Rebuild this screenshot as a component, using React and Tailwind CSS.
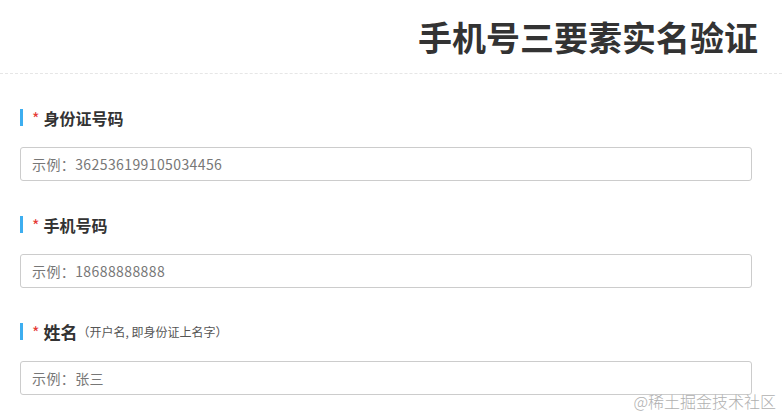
const FONT = '"Noto Sans CJK SC", "Noto Sans", "Liberation Sans", sans-serif';

const FIELDS = [
  { label: '身份证号码', placeholder: '示例：362536199105034456' },
  { label: '手机号码', placeholder: '示例：18688888888' },
  { label: '姓名', hint: '（开户名, 即身份证上名字）', placeholder: '示例：张三', big: true },
];

function Field({ field }) {
  return (
    <div className="pb-[35px]">
      <div className="flex items-center h-[17px]">
        <span className="w-[3px] h-[17px] bg-[#3daef0]" />
        <span className="ml-[9px] text-[16px] text-[#e53935] leading-none">*</span>
        <span
          className={`ml-[4px] font-bold text-[#333] leading-none ${
            field.big ? 'text-[17px]' : 'text-[16px]'
          }`}
        >
          {field.label}
        </span>
        {field.hint && (
          <span className="text-[12px] text-[#555] leading-none">{field.hint}</span>
        )}
      </div>
      <input
        type="text"
        placeholder={field.placeholder}
        className="mt-[21px] block w-full h-[34px] px-[11px] border border-[#ccc] rounded-[3px] text-[14px] tracking-[0.4px] text-[#333] placeholder:text-[#777] outline-none bg-white"
        style={{ fontFamily: FONT }}
      />
    </div>
  );
}

export default function App() {
  return (
    <div className="relative w-[782px] h-[414px] overflow-hidden bg-white" style={{ fontFamily: FONT }}>
      {/* Header */}
      <div className="h-[74px] flex items-center justify-end pr-[24px] border-b border-dashed border-[#e6e6e6]">
        <h1 className="text-[34px] font-bold text-[#333] leading-none">
          手机号三要素实名验证
        </h1>
      </div>

      {/* Form */}
      <div className="pt-[35px] pl-[20px] pr-[30px]">
        {FIELDS.map(f => (
          <Field key={f.label} field={f} />
        ))}
      </div>

      {/* Watermark */}
      <div className="absolute right-[6px] bottom-[5px] text-[16px] font-light text-[#b0b0b0] leading-none">
        @稀土掘金技术社区
      </div>
    </div>
  );
}
